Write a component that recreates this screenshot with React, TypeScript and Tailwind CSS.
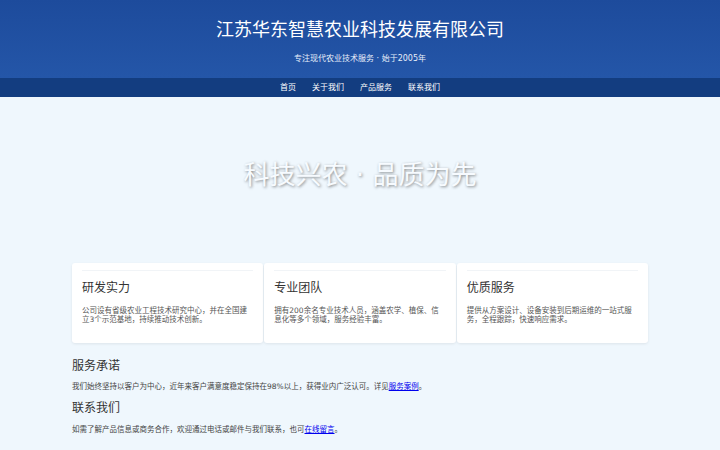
import React from "react";

const font = { fontFamily: '"DejaVu Sans", "Noto Sans CJK SC", sans-serif' };

const navItems = ["首页", "关于我们", "产品服务", "联系我们"];

const features = [
  {
    title: "研发实力",
    text: "公司设有省级农业工程技术研究中心，并在全国建立3个示范基地，持续推动技术创新。",
  },
  {
    title: "专业团队",
    text: "拥有200余名专业技术人员，涵盖农学、植保、信息化等多个领域，服务经验丰富。",
  },
  {
    title: "优质服务",
    text: "提供从方案设计、设备安装到后期运维的一站式服务，全程跟踪，快速响应需求。",
  },
];

export default function App() {
  return (
    <div className="min-h-[450px] w-full bg-[#eff7fd] text-[#333]" style={font}>
      <header className="flex h-[78px] flex-col items-center bg-gradient-to-b from-[#1d4b9c] to-[#2456a8] pt-[20px] text-white">
        <h1 className="text-[18px] leading-[20px] font-normal">江苏华东智慧农业科技发展有限公司</h1>
        <p className="mt-[14px] text-[8px] leading-[10px] text-[#e6eefa]">专注现代农业技术服务 · 始于2005年</p>
      </header>

      <nav className="flex h-[19px] items-center justify-center gap-[16px] bg-[#133d80] text-[8px] text-white">
        {navItems.map((item) => (
          <a key={item} className="leading-[10px]">
            {item}
          </a>
        ))}
      </nav>

      <section className="flex h-[156px] items-center justify-center">
        <h2 className="text-[26px] leading-[30px] font-normal text-[#f7fbff] [text-shadow:1px_1px_3px_rgba(0,0,0,0.45)]">
          科技兴农 · 品质为先
        </h2>
      </section>

      <main className="mx-auto mt-[10px] w-[576px]">
        <div className="grid grid-cols-3 gap-px">
          {features.map((f) => (
            <div key={f.title} className="h-[80px] rounded-[3px] bg-white px-[10px] shadow-[0_1px_3px_rgba(0,0,0,0.08)]">
              <div className="mt-[7px] h-px bg-[#f1f4f7]" />
              <h3 className="mt-[10px] text-[12px] leading-[14px] font-normal text-[#333]">{f.title}</h3>
              <p className="mt-[11px] text-[7.5px] leading-[9px] text-[#555]">{f.text}</p>
            </div>
          ))}
        </div>

        <h3 className="mt-[16px] text-[12px] leading-[14px] font-normal text-[#333]">服务承诺</h3>
        <p className="mt-[9px] text-[7.5px] leading-[9px] text-[#444]">
          我们始终坚持以客户为中心，近年来客户满意度稳定保持在98%以上，获得业内广泛认可。详见
          <a className="text-[#0000ee] underline">服务案例</a>。
        </p>

        <h3 className="mt-[10px] text-[12px] leading-[14px] font-normal text-[#333]">联系我们</h3>
        <p className="mt-[10px] text-[7.5px] leading-[9px] text-[#444]">
          如需了解产品信息或商务合作，欢迎通过电话或邮件与我们联系，也可
          <a className="text-[#0000ee] underline">在线留言</a>。
        </p>
      </main>
    </div>
  );
}
